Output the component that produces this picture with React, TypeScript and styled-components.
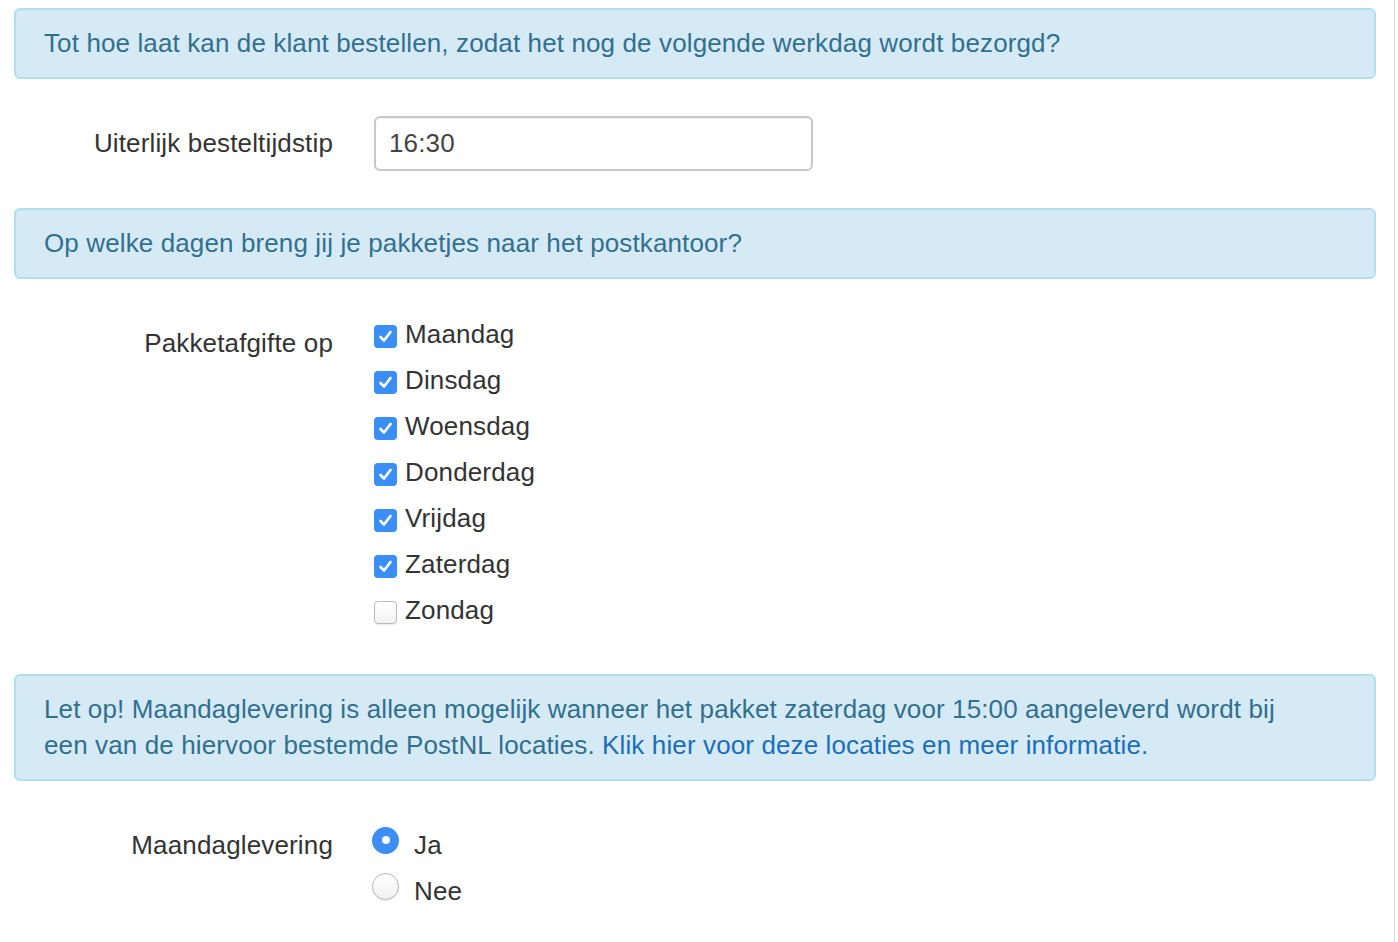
import React from 'react';
import styled, { createGlobalStyle } from 'styled-components';

const GlobalStyle = createGlobalStyle`
  html, body { margin: 0; padding: 0; background: #fff; }
  body {
    font-family: "Liberation Sans", Arial, Helvetica, sans-serif;
    color: #333;
    -webkit-font-smoothing: antialiased;
  }
`;

const Page = styled.div`
  width: 1395px;
  min-height: 942px;
  box-sizing: border-box;
  border-right: 1px solid #dedede;
  padding: 8px 18px 0 14px;
`;

const Alert = styled.div`
  background: #d6eaf6;
  border: 2px solid #b2dfee;
  border-radius: 6px;
  padding: 15px 28px 16px;
  font-size: 26px;
  letter-spacing: 0.12px;
  line-height: 36px;
  color: #31708f;
`;

const AlertLink = styled.a`
  color: #1a6fb8;
  text-decoration: none;
  cursor: pointer;
`;

const FormRow = styled.div<{ $mt: number; $mb: number }>`
  display: grid;
  grid-template-columns: 319px 1fr;
  column-gap: 41px;
  margin: ${(p) => p.$mt}px 0 ${(p) => p.$mb}px;
`;

const Label = styled.label<{ $pt: number }>`
  text-align: right;
  font-size: 26px;
  letter-spacing: 0.15px;
  line-height: 36px;
  color: #333;
  padding-top: ${(p) => p.$pt}px;
`;

const TextInput = styled.input`
  width: 439px;
  height: 55px;
  box-sizing: border-box;
  border: 2px solid #c8c8c8;
  border-radius: 6px;
  padding: 0 13px;
  font-family: "Liberation Sans", Arial, sans-serif;
  font-size: 26px;
  letter-spacing: 0.15px;
  color: #444;
  box-shadow: inset 0 1px 2px rgba(0, 0, 0, 0.06);
  outline: none;
`;

const OptionList = styled.div`
  display: flex;
  flex-direction: column;
`;

const OptionRow = styled.label<{ $gap: number }>`
  display: flex;
  align-items: center;
  gap: ${(p) => p.$gap}px;
  height: 46px;
  font-size: 26px;
  letter-spacing: 0.15px;
  line-height: 36px;
  color: #333;
  cursor: pointer;
`;

const CheckBox = styled.span<{ $checked: boolean }>`
  width: 23px;
  height: 23px;
  flex-shrink: 0;
  box-sizing: border-box;
  border-radius: 4px;
  margin-top: 4px;
  display: flex;
  align-items: center;
  justify-content: center;
  background: ${(p) => (p.$checked ? '#3a8ef5' : 'linear-gradient(#ffffff, #f3f3f3)')};
  border: ${(p) => (p.$checked ? 'none' : '1px solid #b9b9b9')};
  box-shadow: ${(p) => (p.$checked ? 'none' : '0 1px 1px rgba(0,0,0,0.08)')};
`;

const Radio = styled.span<{ $checked: boolean }>`
  width: 27px;
  height: 27px;
  flex-shrink: 0;
  box-sizing: border-box;
  border-radius: 50%;
  margin-left: -2px;
  margin-bottom: 10px;
  display: flex;
  align-items: center;
  justify-content: center;
  background: ${(p) => (p.$checked ? '#3a8ef5' : 'linear-gradient(#ffffff, #f1f1f1)')};
  border: ${(p) => (p.$checked ? 'none' : '1px solid #b5b5b5')};
  box-shadow: ${(p) => (p.$checked ? 'none' : '0 1px 1px rgba(0,0,0,0.1)')};
`;

const RadioDot = styled.span`
  width: 8px;
  height: 8px;
  border-radius: 50%;
  background: #fff;
`;

const days: { name: string; checked: boolean }[] = [
  { name: 'Maandag', checked: true },
  { name: 'Dinsdag', checked: true },
  { name: 'Woensdag', checked: true },
  { name: 'Donderdag', checked: true },
  { name: 'Vrijdag', checked: true },
  { name: 'Zaterdag', checked: true },
  { name: 'Zondag', checked: false },
];

const Check = () => (
  <svg width="17" height="17" viewBox="0 0 17 17">
    <path d="M3.5 9 L7 12.5 L13.5 4" fill="none" stroke="#fff" strokeWidth="2.7" strokeLinecap="round" strokeLinejoin="round" />
  </svg>
);

export default function App() {
  return (
    <>
      <GlobalStyle />
      <Page>
        <Alert>Tot hoe laat kan de klant bestellen, zodat het nog de volgende werkdag wordt bezorgd?</Alert>

        <FormRow $mt={37} $mb={37}>
          <Label $pt={9}>Uiterlijk besteltijdstip</Label>
          <TextInput defaultValue="16:30" />
        </FormRow>

        <Alert>Op welke dagen breng jij je pakketjes naar het postkantoor?</Alert>

        <FormRow $mt={32} $mb={41}>
          <Label $pt={14}>Pakketafgifte op</Label>
          <OptionList>
            {days.map((d) => (
              <OptionRow key={d.name} $gap={8}>
                <CheckBox $checked={d.checked}>{d.checked && <Check />}</CheckBox>
                {d.name}
              </OptionRow>
            ))}
          </OptionList>
        </FormRow>

        <Alert>
          Let op! Maandaglevering is alleen mogelijk wanneer het pakket zaterdag voor 15:00 aangeleverd wordt bij
          <br />
          een van de hiervoor bestemde PostNL locaties.{' '}
          <AlertLink>Klik hier voor deze locaties en meer informatie.</AlertLink>
        </Alert>

        <FormRow $mt={41} $mb={0}>
          <Label $pt={5}>Maandaglevering</Label>
          <OptionList>
            <OptionRow $gap={15}>
              <Radio $checked={true}>
                <RadioDot />
              </Radio>
              Ja
            </OptionRow>
            <OptionRow $gap={15}>
              <Radio $checked={false} />
              Nee
            </OptionRow>
          </OptionList>
        </FormRow>
      </Page>
    </>
  );
}
